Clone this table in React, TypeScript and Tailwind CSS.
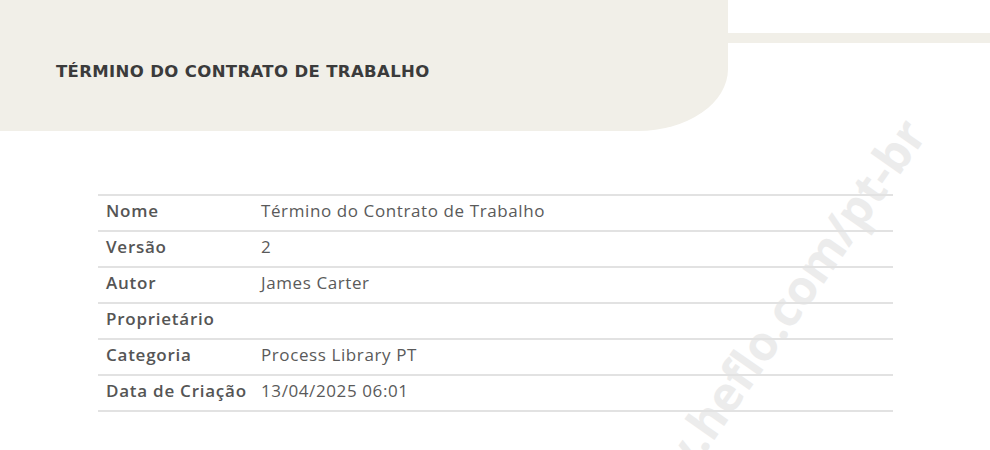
const rows: [string, string][] = [
  ["Nome", "Término do Contrato de Trabalho"],
  ["Versão", "2"],
  ["Autor", "James Carter"],
  ["Proprietário", ""],
  ["Categoria", "Process Library PT"],
  ["Data de Criação", "13/04/2025 06:01"],
];

export default function App() {
  return (
    <div className="relative w-[990px] h-[450px] overflow-hidden bg-white font-['Open_Sans',sans-serif]">
      {/* Marca d'água */}
      <div className="absolute left-[508px] top-[296px] w-[520px] -rotate-[55deg] text-[48px] font-bold text-[#ececec] whitespace-nowrap select-none">
        www.heflo.com/pt-br
      </div>

      {/* Cabeçalho */}
      <div className="relative flex items-start">
        <div className="w-[728px] h-[131px] bg-[#f1efe8] rounded-br-[90px_62px] flex items-center pl-[56px] pt-[14px]">
          <h1 className="font-['DejaVu_Sans',sans-serif] text-[16.5px] font-bold text-[#3b3b3b] tracking-[0.36px] uppercase">
            Término do Contrato de Trabalho
          </h1>
        </div>
        <div className="flex-1 h-[10px] mt-[33px] bg-[#f1efe8]"></div>
      </div>

      {/* Tabela de propriedades */}
      <div className="relative mt-[63px] ml-[98px] w-[795px] border-t-2 border-[#e2e2e2]">
        {rows.map(([label, value]) => (
          <div key={label} className="flex h-[36px] items-center pb-[5px] border-b-2 border-[#e2e2e2] text-[17px] tracking-[0.6px] text-[#555555]">
            <div className="w-[163px] pl-[8px] font-semibold tracking-[0.75px]">{label}</div>
            <div className="flex-1 text-[#5a5a5a]">{value}</div>
          </div>
        ))}
      </div>
    </div>
  );
}
